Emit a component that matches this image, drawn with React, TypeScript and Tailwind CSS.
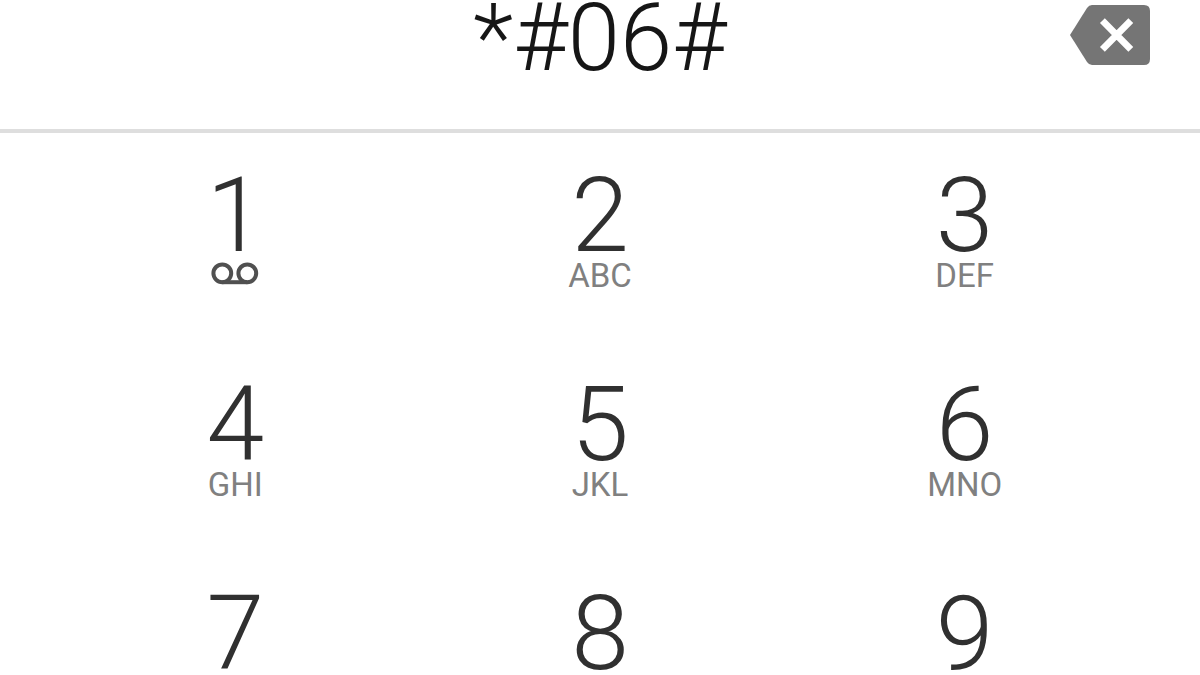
const keys = [
  { digit: "1", letters: "" },
  { digit: "2", letters: "ABC" },
  { digit: "3", letters: "DEF" },
  { digit: "4", letters: "GHI" },
  { digit: "5", letters: "JKL" },
  { digit: "6", letters: "MNO" },
  { digit: "7", letters: "PQRS" },
  { digit: "8", letters: "TUV" },
  { digit: "9", letters: "WXYZ" },
];

const VoicemailIcon = () => (
  <svg
    className="h-6 w-12 overflow-visible"
    viewBox="0 0 48 24"
    fill="none"
    stroke="#505050"
    strokeWidth="4"
  >
    <circle cx="11.3" cy="9.3" r="8.9" />
    <circle cx="36.3" cy="9.3" r="8.9" />
    <path d="M11.3 18.2H36.3" />
  </svg>
);

const BackspaceIcon = () => (
  <svg className="h-[60px] w-20" viewBox="0 0 80 60" fill="none">
    <path d="M22 0H74Q80 0 80 6V54Q80 60 74 60H22Q19 60 17 57L0 30L17 3Q19 0 22 0Z" fill="#757575" />
    <path d="M32.4 15.6L60.8 44.4M60.8 15.6L32.4 44.4" stroke="white" strokeWidth="6.8" />
  </svg>
);

const App = () => {
  return (
    <main className="h-screen overflow-hidden bg-white font-['Roboto',sans-serif]">
      <header className="grid h-[133px] grid-cols-[1fr_auto_1fr] items-start border-b-4 border-[#dedede] px-[50px]">
        <output className="col-start-2 text-[94px] font-light leading-[76px] text-[#161616]">
          *#06#
        </output>
        <button type="button" aria-label="Backspace" className="mt-[5px] justify-self-end">
          <BackspaceIcon />
        </button>
      </header>

      <div className="grid grid-cols-3 px-[53px] pt-[43px]">
        {keys.map((key) => (
          <button key={key.digit} type="button" className="flex h-[209px] flex-col items-center">
            <span className="text-[104px] font-light leading-[80px] text-[#303030]">{key.digit}</span>
            <span className="mt-2 flex h-6 items-center text-[33px] leading-6 text-[#808080]">
              {key.digit === "1" ? <VoicemailIcon /> : key.letters}
            </span>
          </button>
        ))}
      </div>
    </main>
  );
};

export default App;
